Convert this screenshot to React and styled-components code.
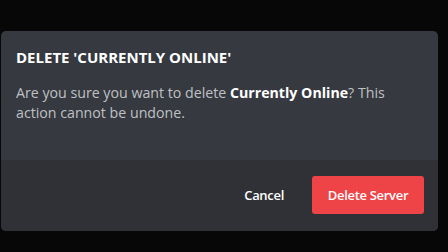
import React from "react";
import styled, { createGlobalStyle } from "styled-components";

const Global = createGlobalStyle`
  html, body { margin: 0; padding: 0; background: #070707; }
  body { width: 448px; height: 252px; overflow: hidden; font-family: "Open Sans", "Noto Sans", sans-serif; }
`;

const Page = styled.div`
  width: 448px;
  height: 252px;
  padding: 31px 10px 0 1px;
  box-sizing: border-box;
`;

const Modal = styled.div`
  width: 437px;
  height: 200px;
  border-radius: 5px;
  overflow: hidden;
  background: #36393f;
  display: flex;
  flex-direction: column;
`;

const Body = styled.div`
  flex: 1;
  padding: 16px 16px 0 15px;
`;

const Title = styled.h2`
  margin: 0;
  font-size: 15px;
  font-weight: 700;
  color: #ffffff;
  line-height: 20px;
`;

const Text = styled.p`
  margin: 16px 0 0;
  font-size: 14.2px;
  line-height: 20px;
  color: #bfc1c4;
  b { font-weight: 700; color: #ffffff; }
`;

const Footer = styled.div`
  height: 70px;
  background: #2f3136;
  display: flex;
  align-items: center;
  justify-content: flex-end;
  padding: 0 14px 1px 0;
  gap: 28px;
`;

const LinkButton = styled.button`
  background: none;
  border: none;
  padding: 0;
  font-family: inherit;
  font-size: 13px;
  letter-spacing: -0.3px;
  font-weight: 600;
  color: #ffffff;
`;

const DangerButton = styled.button`
  width: 112px;
  height: 38px;
  border: none;
  border-radius: 3px;
  background: #ef4447;
  color: #ffffff;
  font-family: inherit;
  font-size: 13px;
  letter-spacing: -0.3px;
  font-weight: 600;
`;

export default function App() {
  return (
    <>
      <Global />
      <Page>
        <Modal>
          <Body>
            <Title>DELETE 'CURRENTLY ONLINE'</Title>
            <Text>
              Are you sure you want to delete <b>Currently Online</b>? This action cannot be undone.
            </Text>
          </Body>
          <Footer>
            <LinkButton>Cancel</LinkButton>
            <DangerButton>Delete Server</DangerButton>
          </Footer>
        </Modal>
      </Page>
    </>
  );
}
